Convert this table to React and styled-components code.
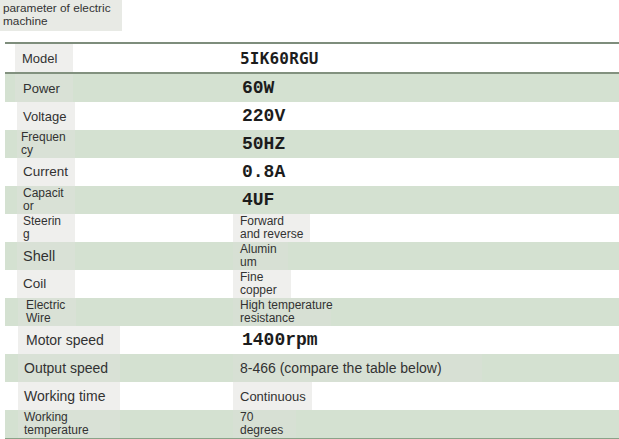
import React from "react";
import styled, { createGlobalStyle } from "styled-components";

const GlobalStyle = createGlobalStyle`
  html, body { margin: 0; padding: 0; background: #ffffff; }
  body {
    width: 619px;
    height: 439px;
    overflow: hidden;
    font-family: "Liberation Sans", Arial, sans-serif;
    color: #2d2d2d;
  }
`;

const Page = styled.div`
  display: flex;
  flex-direction: column;
  width: 619px;
`;

const Title = styled.div`
  align-self: flex-start;
  width: 122px;
  height: 31px;
  box-sizing: border-box;
  padding: 2px 2px 0 3px;
  background: #e8eae5;
  font-size: 11.8px;
  line-height: 13px;
  color: #333;
`;

const Table = styled.div`
  margin: 11px 0 0 5px;
  border-top: 2px solid #7e8d7c;
  border-bottom: 2px solid #8ba289;
  display: flex;
  flex-direction: column;
`;

const Row = styled.div`
  height: 28px;
  display: grid;
  grid-template-columns: ${(p) => 228 - p.$indent}px 1fr;
  padding-left: ${(p) => p.$indent}px;
  background: ${(p) => (p.$green ? "#d4e1d1" : "#ffffff")};
  border-bottom: ${(p) => (p.$ruled ? "2px solid #82917f" : "none")};
`;

const Label = styled.div`
  justify-self: start;
  width: ${(p) => p.$w}px;
  box-sizing: border-box;
  padding-left: ${(p) => p.$pad}px;
  display: flex;
  align-items: center;
  background: ${(p) => (p.$green ? "#d9e1d6" : "#efefed")};
  font-size: ${(p) => p.$size}px;
  line-height: ${(p) => (p.$two ? p.$size + 1 : p.$size + 2)}px;
  color: #323232;
`;

const BigValue = styled.div`
  display: flex;
  align-items: center;
  padding-left: ${(p) => (p.$model ? 7 : 9)}px;
  font-family: ${(p) =>
    p.$model
      ? '"DejaVu Sans Mono", "Liberation Mono", monospace'
      : '"Liberation Mono", "Courier New", monospace'};
  font-weight: bold;
  font-size: ${(p) => (p.$model ? 16 : 18)}px;
  color: #1c1c1c;
  letter-spacing: ${(p) => (p.$model ? "0.2px" : "0")};
`;

const SmallValue = styled.div`
  justify-self: start;
  width: ${(p) => p.$w}px;
  box-sizing: border-box;
  padding-left: 7px;
  display: flex;
  align-items: center;
  white-space: nowrap;
  background: ${(p) => (p.$green ? "#d7e0d4" : "#efefed")};
  font-size: ${(p) => p.$size}px;
  line-height: ${(p) => (p.$two ? p.$size + 1 : p.$size + 2)}px;
  color: #323232;
`;

const rows = [
  { label: ["Model"], lw: 58, ls: 13, indent: 10, pad: 7, big: "5IK60RGU", model: true },
  { label: ["Power"], lw: 58, ls: 13, indent: 10, pad: 8, big: "60W" },
  { label: ["Voltage"], lw: 58, ls: 13, indent: 12, pad: 6, big: "220V" },
  { label: ["Frequen", "cy"], lw: 58, ls: 12, indent: 12, pad: 4, big: "50HZ" },
  { label: ["Current"], lw: 58, ls: 13.5, indent: 12, pad: 6, big: "0.8A" },
  { label: ["Capacit", "or"], lw: 58, ls: 12, indent: 12, pad: 6, big: "4UF" },
  { label: ["Steerin", "g"], lw: 58, ls: 12, indent: 12, pad: 6, small: ["Forward", "and reverse"], sw: 77, ss: 12 },
  { label: ["Shell"], lw: 58, ls: 14.5, indent: 12, pad: 6, small: ["Alumin", "um"], sw: 55, ss: 12 },
  { label: ["Coil"], lw: 58, ls: 13.5, indent: 12, pad: 6, small: ["Fine", "copper"], sw: 58, ss: 12 },
  { label: ["Electric", "Wire"], lw: 58, ls: 12, indent: 13, pad: 8, small: ["High temperature", "resistance"], sw: 98, ss: 12 },
  { label: ["Motor speed"], lw: 102, ls: 14, indent: 13, pad: 8, big: "1400rpm" },
  { label: ["Output speed"], lw: 102, ls: 14, indent: 13, pad: 6, small: ["8-466 (compare the table below)"], sw: 249, ss: 14 },
  { label: ["Working time"], lw: 102, ls: 14, indent: 13, pad: 6, small: ["Continuous"], sw: 79, ss: 13 },
  { label: ["Working", "temperature"], lw: 102, ls: 12, indent: 13, pad: 6, small: ["70", "degrees"], sw: 63, ss: 12 },
];

const Lines = ({ parts }) =>
  parts.map((t, i) => (
    <React.Fragment key={i}>
      {i > 0 && <br />}
      {t}
    </React.Fragment>
  ));

export default function App() {
  return (
    <>
      <GlobalStyle />
      <Page>
        <Title>
          parameter of electric
          <br />
          machine
        </Title>
        <Table>
          {rows.map((r, i) => {
            const green = i % 2 === 1;
            return (
              <Row key={i} $green={green} $indent={r.indent} $ruled={i === 0}>
                <Label
                  $w={r.lw}
                  $size={r.ls}
                  $pad={r.pad}
                  $two={r.label.length > 1}
                  $green={green}
                >
                  <span>
                    <Lines parts={r.label} />
                  </span>
                </Label>
                {r.big ? (
                  <BigValue $model={r.model}>{r.big}</BigValue>
                ) : (
                  <SmallValue
                    $w={r.sw}
                    $size={r.ss}
                    $two={r.small.length > 1}
                    $green={green}
                  >
                    <span>
                      <Lines parts={r.small} />
                    </span>
                  </SmallValue>
                )}
              </Row>
            );
          })}
        </Table>
      </Page>
    </>
  );
}
